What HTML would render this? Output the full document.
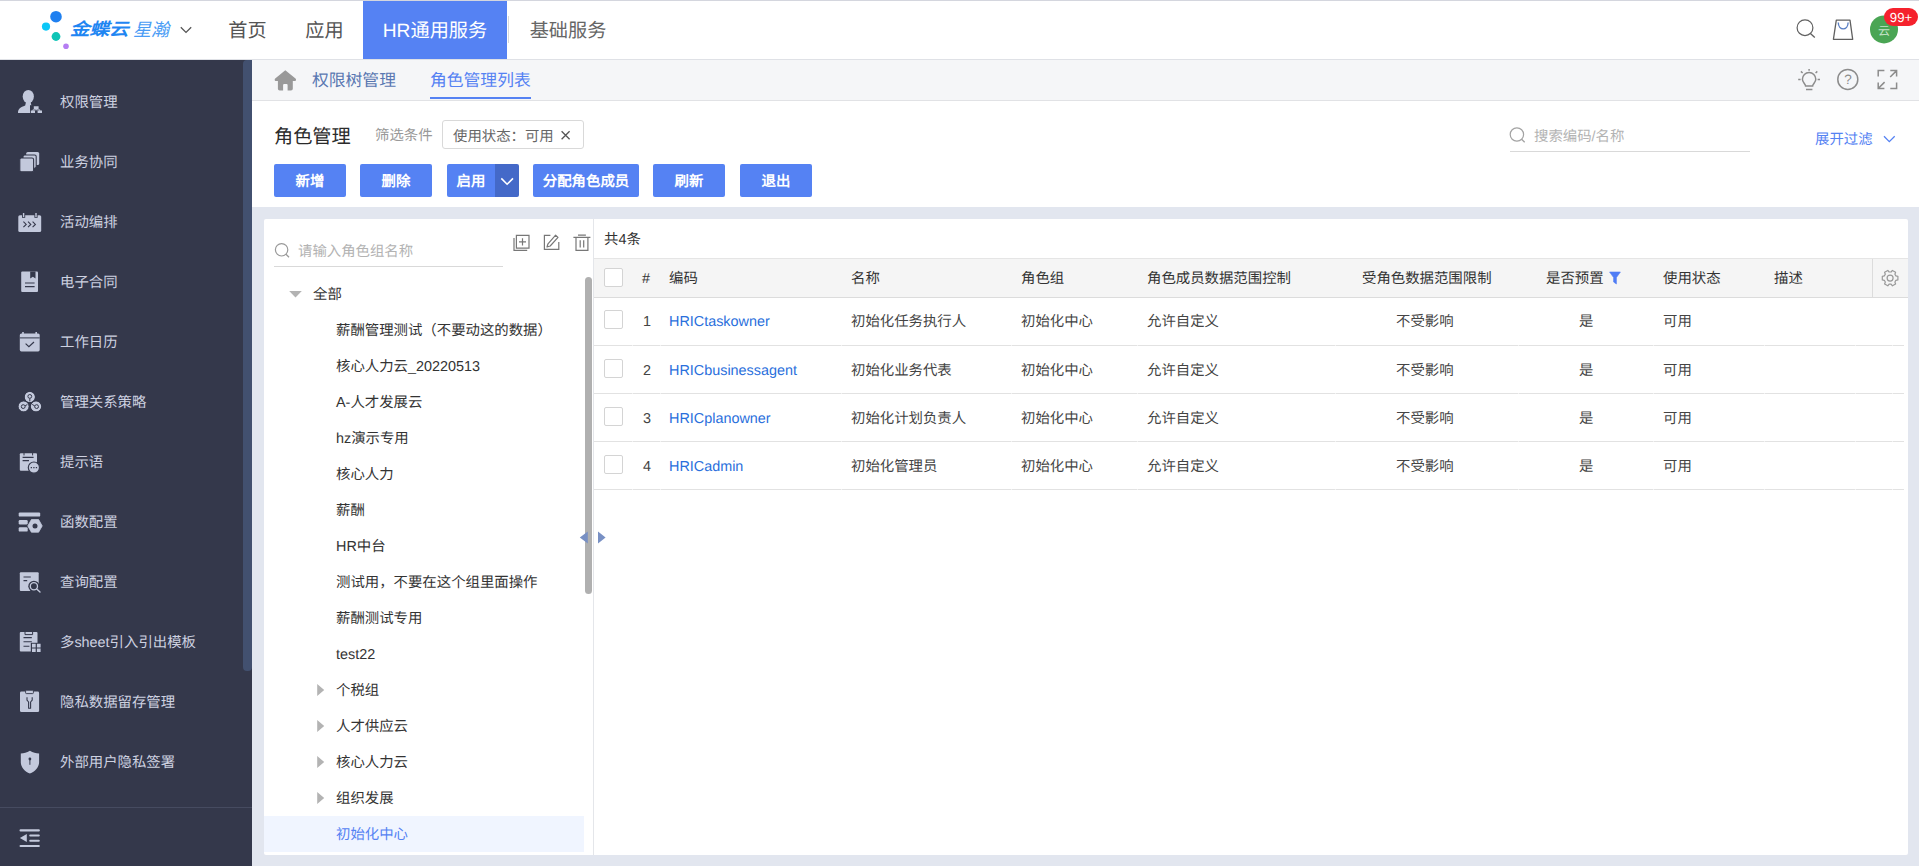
<!DOCTYPE html>
<html lang="zh-CN">
<head>
<meta charset="utf-8">
<title>角色管理</title>
<style>
*{box-sizing:border-box;margin:0;padding:0}
html,body{width:1919px;height:866px;overflow:hidden;background:#e2e6ef;font-family:"Liberation Sans",sans-serif;font-size:14.4px;color:#333;text-rendering:geometricPrecision}
.abs{position:absolute}
svg{display:block;position:absolute;overflow:visible}
/* top nav */
#top{position:absolute;left:0;top:0;width:1919px;height:60px;background:#fff;border-top:1px solid #d4d6de;border-bottom:1px solid #dfe1e6}
.nt{position:absolute;top:0;height:58px;line-height:61px;font-size:19.2px;color:#555;text-align:center;white-space:nowrap}
.nt.on{background:#5582f3;color:#fff}
/* sidebar */
#side{position:absolute;left:0;top:60px;width:252px;height:806px;background:#34384b}
.si{position:absolute;left:60px;height:20px;line-height:20px;font-size:14.4px;margin-top:2px;color:#cdd1e0;white-space:nowrap}
.ic{fill:#c3c9dc}
/* tab bar */
#tabs{position:absolute;left:252px;top:60px;width:1667px;height:41px;background:#f5f6f8;border-bottom:1px solid #e1e2e5}
.tb{position:absolute;top:0;height:40px;line-height:42px;font-size:16.8px;white-space:nowrap}
/* header */
#head{position:absolute;left:252px;top:101px;width:1667px;height:106px;background:#fff}
.btn{position:absolute;top:164px;height:33px;line-height:36px;background:#5582f3;color:#fff;font-size:14.4px;font-weight:bold;text-align:center;border-radius:2px;white-space:nowrap}
/* panels */
#tree{position:absolute;left:264px;top:219px;width:330px;height:636px;background:#fff;border-radius:2px 0 0 2px;border-right:1px solid #e4e6ea}
#grid{position:absolute;left:594px;top:219px;width:1314px;height:636px;background:#fff;border-radius:0 2px 2px 0}
.tr{position:absolute;left:336px;height:20px;line-height:20px;font-size:14.4px;margin-top:1px;color:#333;white-space:nowrap}
.th,.td{position:absolute;height:20px;line-height:20px;font-size:14.4px;white-space:nowrap}
.th{color:#333;margin-top:1px}.td{color:#444;margin-top:1px}
.lk{color:#2a6fdc}
.cb{position:absolute;left:604px;width:19px;height:19px;border:1px solid #d4d4d4;border-radius:2px;background:#fff}
.rl{position:absolute;left:594px;width:1310px;height:1px;background:#e2e2e2}
</style>
</head>
<body>
<!-- TOP NAV -->
<div id="top"></div>
<svg style="left:40px;top:10px" width="32" height="42" viewBox="40 10 32 42">
 <circle cx="56" cy="16.7" r="5.8" fill="#1f80f0"/>
 <circle cx="46" cy="26.6" r="4.1" fill="#0cc7f7"/>
 <circle cx="56" cy="36.5" r="4.4" fill="#0fc4b6"/>
 <circle cx="66" cy="46.2" r="2.8" fill="#b57df2"/>
</svg>
<div class="abs" style="left:70px;top:19px;height:22px;line-height:22px;font-size:17px;font-weight:bold;font-style:italic;color:#1f86f2;white-space:nowrap;transform:scaleX(1.15);transform-origin:0 50%">金蝶云</div>
<div class="abs" style="left:133px;top:19px;height:22px;line-height:22px;font-size:18px;font-style:italic;color:#4a9cf5;white-space:nowrap">星瀚</div>
<svg style="left:180px;top:26px" width="12" height="8" viewBox="0 0 12 8"><path d="M0.8 1.2 L6 6.4 L11.2 1.2" fill="none" stroke="#555" stroke-width="1.3"/></svg>
<div class="nt" style="left:209px;width:77px;top:1px">首页</div>
<div class="nt" style="left:286px;width:77px;top:1px">应用</div>
<div class="nt on" style="left:363px;width:144px;top:1px">HR通用服务</div>
<div class="abs" style="left:508px;top:16px;width:1px;height:27px;background:#d9d9d9"></div>
<div class="nt" style="left:510px;width:116px;top:1px;color:#666">基础服务</div>

<!-- SIDEBAR -->
<div id="side"></div>
<div class="abs" style="left:243px;top:60px;width:9px;height:611px;background:#42506f;border-radius:4px 0 4px 4px"></div>
<div class="si" style="top:91px">权限管理</div>
<div class="si" style="top:151px">业务协同</div>
<div class="si" style="top:211px">活动编排</div>
<div class="si" style="top:271px">电子合同</div>
<div class="si" style="top:331px">工作日历</div>
<div class="si" style="top:391px">管理关系策略</div>
<div class="si" style="top:451px">提示语</div>
<div class="si" style="top:511px">函数配置</div>
<div class="si" style="top:571px">查询配置</div>
<div class="si" style="top:631px">多sheet引入引出模板</div>
<div class="si" style="top:691px">隐私数据留存管理</div>
<div class="si" style="top:751px">外部用户隐私签署</div>
<div class="abs" style="left:0;top:807px;width:252px;height:1px;background:#464b60"></div>

<!-- TAB BAR -->
<div id="tabs"></div>
<div class="tb" style="left:312px;top:60px;color:#5a78b2">权限树管理</div>
<div class="tb" style="left:430px;top:60px;color:#5582f3">角色管理列表</div>
<div class="abs" style="left:430px;top:97px;width:101px;height:2px;background:#5582f3"></div>

<!-- HEADER -->
<div id="head"></div>
<div class="abs" style="left:274px;top:125px;height:26px;line-height:26px;font-size:19.2px;color:#2b2b2b;white-space:nowrap">角色管理</div>
<div class="abs" style="left:375px;top:126px;height:20px;line-height:20px;font-size:14.4px;color:#999;white-space:nowrap">筛选条件</div>
<div class="abs" style="left:442px;top:120px;width:142px;height:29px;border:1px solid #d9d9d9;border-radius:3px;background:#fff"></div>
<div class="abs" style="left:453px;top:126.5px;height:20px;line-height:20px;font-size:14.4px;color:#666;white-space:nowrap">使用状态：可用</div>
<div class="btn" style="left:274px;width:72px">新增</div>
<div class="btn" style="left:360px;width:72px">删除</div>
<div class="btn" style="left:447px;width:48px;border-radius:2px 0 0 2px">启用</div>
<div class="btn" style="left:495px;width:24px;background:#4469c8;border-radius:0 2px 2px 0"></div>
<div class="btn" style="left:533px;width:106px">分配角色成员</div>
<div class="btn" style="left:653px;width:72px">刷新</div>
<div class="btn" style="left:740px;width:72px">退出</div>
<div class="abs" style="left:1510px;top:151px;width:240px;height:1px;background:#d9d9d9"></div>
<div class="abs" style="left:1534px;top:126.5px;height:20px;line-height:20px;font-size:14.4px;color:#b3b3b3;white-space:nowrap">搜索编码/名称</div>
<div class="abs" style="left:1815px;top:129.5px;height:20px;line-height:20px;font-size:14.4px;color:#5582f3;white-space:nowrap">展开过滤</div>

<!-- TREE PANEL -->
<div id="tree"></div>
<div class="abs" style="left:274px;top:266px;width:229px;height:1px;background:#d9d9d9"></div>
<div class="abs" style="left:298px;top:241.5px;height:20px;line-height:20px;font-size:14.4px;color:#b3b3b3;white-space:nowrap">请输入角色组名称</div>
<div class="abs" style="left:264px;top:816px;width:320px;height:36px;background:#f0f5ff"></div>
<div class="abs" style="left:585px;top:277px;width:7px;height:317px;background:#b0b0b0;border-radius:4px"></div>
<div class="tr" style="left:313px;top:284px">全部</div>
<div class="tr" style="top:320px">薪酬管理测试（不要动这的数据）</div>
<div class="tr" style="top:356px">核心人力云_20220513</div>
<div class="tr" style="top:392px">A-人才发展云</div>
<div class="tr" style="top:428px">hz演示专用</div>
<div class="tr" style="top:464px">核心人力</div>
<div class="tr" style="top:500px">薪酬</div>
<div class="tr" style="top:536px">HR中台</div>
<div class="tr" style="top:572px">测试用，不要在这个组里面操作</div>
<div class="tr" style="top:608px">薪酬测试专用</div>
<div class="tr" style="top:644px">test22</div>
<div class="tr" style="top:680px">个税组</div>
<div class="tr" style="top:716px">人才供应云</div>
<div class="tr" style="top:752px">核心人力云</div>
<div class="tr" style="top:788px">组织发展</div>
<div class="tr" style="top:824px;color:#5582f3">初始化中心</div>

<!-- GRID PANEL -->
<div id="grid"></div>
<div class="abs" style="left:604px;top:229.5px;height:20px;line-height:20px;font-size:14.4px;color:#333;white-space:nowrap">共4条</div>
<div class="abs" style="left:594px;top:258px;width:1314px;height:40px;background:#f5f5f5;border-top:1px solid #e5e5e5;border-bottom:1px solid #dcdcdc"></div>
<div class="abs" style="left:1872px;top:259px;width:1px;height:38px;background:#dcdcdc"></div>
<div class="cb" style="top:268px"></div>
<div class="th" style="left:642px;top:268px">#</div>
<div class="th" style="left:669px;top:268px">编码</div>
<div class="th" style="left:851px;top:268px">名称</div>
<div class="th" style="left:1021px;top:268px">角色组</div>
<div class="th" style="left:1147px;top:268px">角色成员数据范围控制</div>
<div class="th" style="left:1362px;top:268px">受角色数据范围限制</div>
<div class="th" style="left:1546px;top:268px">是否预置</div>
<div class="th" style="left:1663px;top:268px">使用状态</div>
<div class="th" style="left:1774px;top:268px">描述</div>
<!-- ROWS -->
<div class="cb" style="top:310px"></div>
<div class="td" style="left:643px;top:311px">1</div>
<div class="td lk" style="left:669px;top:311px">HRICtaskowner</div>
<div class="td" style="left:851px;top:311px">初始化任务执行人</div>
<div class="td" style="left:1021px;top:311px">初始化中心</div>
<div class="td" style="left:1147px;top:311px">允许自定义</div>
<div class="td" style="left:1396px;top:311px">不受影响</div>
<div class="td" style="left:1579px;top:311px">是</div>
<div class="td" style="left:1663px;top:311px">可用</div>
<div class="rl" style="top:345px"></div>
<div class="cb" style="top:359px"></div>
<div class="td" style="left:643px;top:360px">2</div>
<div class="td lk" style="left:669px;top:360px">HRICbusinessagent</div>
<div class="td" style="left:851px;top:360px">初始化业务代表</div>
<div class="td" style="left:1021px;top:360px">初始化中心</div>
<div class="td" style="left:1147px;top:360px">允许自定义</div>
<div class="td" style="left:1396px;top:360px">不受影响</div>
<div class="td" style="left:1579px;top:360px">是</div>
<div class="td" style="left:1663px;top:360px">可用</div>
<div class="rl" style="top:393px"></div>
<div class="cb" style="top:407px"></div>
<div class="td" style="left:643px;top:408px">3</div>
<div class="td lk" style="left:669px;top:408px">HRICplanowner</div>
<div class="td" style="left:851px;top:408px">初始化计划负责人</div>
<div class="td" style="left:1021px;top:408px">初始化中心</div>
<div class="td" style="left:1147px;top:408px">允许自定义</div>
<div class="td" style="left:1396px;top:408px">不受影响</div>
<div class="td" style="left:1579px;top:408px">是</div>
<div class="td" style="left:1663px;top:408px">可用</div>
<div class="rl" style="top:441px"></div>
<div class="cb" style="top:455px"></div>
<div class="td" style="left:643px;top:456px">4</div>
<div class="td lk" style="left:669px;top:456px">HRICadmin</div>
<div class="td" style="left:851px;top:456px">初始化管理员</div>
<div class="td" style="left:1021px;top:456px">初始化中心</div>
<div class="td" style="left:1147px;top:456px">允许自定义</div>
<div class="td" style="left:1396px;top:456px">不受影响</div>
<div class="td" style="left:1579px;top:456px">是</div>
<div class="td" style="left:1663px;top:456px">可用</div>
<div class="rl" style="top:489px"></div>


<!-- column notches on row lines -->
<div class="abs" style="left:632px;top:298px;width:1px;height:192px;background:rgba(255,255,255,.55)"></div><div class="abs" style="left:660px;top:298px;width:1px;height:192px;background:rgba(255,255,255,.55)"></div><div class="abs" style="left:841px;top:298px;width:1px;height:192px;background:rgba(255,255,255,.55)"></div><div class="abs" style="left:1011px;top:298px;width:1px;height:192px;background:rgba(255,255,255,.55)"></div><div class="abs" style="left:1137px;top:298px;width:1px;height:192px;background:rgba(255,255,255,.55)"></div><div class="abs" style="left:1335px;top:298px;width:1px;height:192px;background:rgba(255,255,255,.55)"></div><div class="abs" style="left:1518px;top:298px;width:1px;height:192px;background:rgba(255,255,255,.55)"></div><div class="abs" style="left:1653px;top:298px;width:1px;height:192px;background:rgba(255,255,255,.55)"></div><div class="abs" style="left:1764px;top:298px;width:1px;height:192px;background:rgba(255,255,255,.55)"></div><div class="abs" style="left:1855px;top:298px;width:1px;height:192px;background:rgba(255,255,255,.55)"></div><div class="abs" style="left:1892px;top:298px;width:1px;height:192px;background:rgba(255,255,255,.55)"></div>
<!-- ICON OVERLAY -->
<svg id="ov" style="left:0;top:0" width="1919" height="866" viewBox="0 0 1919 866">
<defs><style>
 .sf{fill:#c3c9dc}.sd{fill:#34384b}.sl{stroke:#34384b;fill:none}
 .g{fill:none;stroke:#8c8c8c;stroke-width:1.5}
 .t{fill:none;stroke:#777;stroke-width:1.2}
</style></defs>
<!-- top right: search -->
<circle cx="1805" cy="27.7" r="7.9" fill="none" stroke="#606060" stroke-width="1.2"/>
<path d="M1810.4 33.5 L1814.8 37.6" stroke="#606060" stroke-width="1.3" fill="none"/>
<!-- bag -->
<path d="M1836.3 20.2 H1850 L1852.7 39.3 H1833.4 Z" fill="none" stroke="#606060" stroke-width="1.3" stroke-linejoin="round"/>
<path d="M1838.3 22.5 C1838.3 31 1848.1 31 1848.1 22.5" fill="none" stroke="#5a7fc4" stroke-width="1.4"/>
<!-- avatar -->
<circle cx="1884" cy="29.4" r="14" fill="#4aa554"/>
<!-- second row: bulb -->
<path class="g" d="M1805.6 86 C1805.6 84 1802.4 82.5 1802.4 79.2 A6.7 6.7 0 0 1 1815.8 79.2 C1815.8 82.5 1812.6 84 1812.6 86 Z"/>
<path class="g" d="M1806 89.6 H1812.4 M1809.1 69 V70.8 M1798.2 79.4 H1800.6 M1817.6 79.4 H1820 M1800.9 71.4 L1802.6 73 M1817.3 71.4 L1815.6 73"/>
<!-- help -->
<circle class="g" cx="1847.8" cy="79.4" r="10" stroke-width="1.4"/>
<!-- fullscreen -->
<path class="g" d="M1878.2 76.5 V70.6 H1884.4 M1890.3 70.6 H1896.6 V76.5 M1896.6 70.6 L1890.2 77 M1878.2 82.6 V88.5 H1884.4 M1878.2 88.5 L1884.6 82.1 M1890.3 88.5 H1896.6 V82.6"/>
<!-- home -->
<path d="M285.3 70.3 L295.5 78.5 Q296 78.9 296 79.6 V80 Q296 80.9 295 80.9 H292.8 V88.8 Q292.8 90.6 291 90.6 H287.6 V85 Q287.6 84 286.6 84 H284.1 Q283.1 84 283.1 85 V90.6 H279.7 Q277.9 90.6 277.9 88.8 V80.9 H275.7 Q274.7 80.9 274.7 80 V79.6 Q274.7 78.9 275.2 78.5 Z" fill="#999"/>
<!-- chip x -->
<path d="M561.6 131.3 L569.6 139.2 M569.6 131.3 L561.6 139.2" stroke="#555" stroke-width="1.3" fill="none"/>
<!-- button chevron -->
<path d="M501.3 178.4 L507.1 184.2 L513 178.4" stroke="#fff" stroke-width="1.6" fill="none"/>
<!-- header search -->
<circle cx="1516.9" cy="134.5" r="6.7" fill="none" stroke="#a3a3a3" stroke-width="1.2"/>
<path d="M1521.6 139.3 L1524.7 142.3" stroke="#a3a3a3" stroke-width="1.3" fill="none"/>
<!-- expand chevron -->
<path d="M1884 136.3 L1889.3 141.7 L1894.7 136.3" stroke="#5582f3" stroke-width="1.3" fill="none"/>
<!-- tree search -->
<circle cx="281.6" cy="249.8" r="6.2" fill="none" stroke="#999" stroke-width="1.2"/>
<path d="M286 254.3 L289 257.3" stroke="#999" stroke-width="1.3" fill="none"/>
<!-- tree toolbar -->
<path class="t" d="M516.4 235.3 H529 V248.1 H516.4 Z M522.5 238.3 V245.4 M519 241.9 H526 M514 238 V250.4 H527.2"/>
<path class="t" d="M550.4 235.4 H544.4 V249.4 H558.8 V242"/>
<path class="t" d="M547 247 L548 243.8 L555.6 235.2 L558 237.4 L550.2 246 Z" stroke-linejoin="round"/>
<path class="t" d="M573.4 237.3 H590.4 M578 235.2 H585.9 M576 237.3 V250.3 H587.9 V237.3 M580.2 240.3 V247.5 M583.7 240.3 V247.5"/>
<!-- tree triangles -->
<path d="M289.2 291 H301.8 L295.5 297.6 Z" fill="#b3b3b3"/>
<path d="M317.2 684 L324.2 690 L317.2 696 Z M317.2 720 L324.2 726 L317.2 732 Z M317.2 756 L324.2 762 L317.2 768 Z M317.2 792 L324.2 798 L317.2 804 Z" fill="#b3b3b3"/>
<!-- splitter arrows -->
<path d="M579.8 537.5 L587.8 531.6 V543.4 Z M605.6 537.5 L598 531.6 V543.4 Z" fill="#7890c4"/>
<!-- filter funnel -->
<path d="M1609.6 272 H1620.4 L1616.4 277.6 V284 L1613.6 282 V277.6 Z" fill="#4f7cf5" stroke="#4f7cf5" stroke-width="0.6" stroke-linejoin="round"/>
<!-- gear -->
<circle cx="1890.1" cy="278.1" r="3" fill="none" stroke="#999" stroke-width="1.2"/>
<path fill="none" stroke="#999" stroke-width="1.2" stroke-linejoin="round" d="M1895.9 275.9 L1897.9 276.3 L1897.9 279.9 L1895.9 280.3 L1894.9 282.0 L1895.6 284.0 L1892.4 285.8 L1891.1 284.2 L1889.1 284.2 L1887.8 285.8 L1884.6 284.0 L1885.3 282.0 L1884.3 280.3 L1882.3 279.9 L1882.3 276.3 L1884.3 275.9 L1885.3 274.2 L1884.6 272.2 L1887.8 270.4 L1889.1 272.0 L1891.1 272.0 L1892.4 270.4 L1895.6 272.2 L1894.9 274.2 Z"/>

<!-- SIDEBAR ICONS -->
<!-- 1 person + org -->
<ellipse class="sf" cx="28.3" cy="96.6" rx="5.6" ry="6.7"/>
<path class="sf" d="M18 113 C18 108.5 20.5 107.3 25.2 105.4 L26 102 H30.6 L31.4 105.4 C36 107.3 38.6 108.5 38.6 113 Z"/>
<rect class="sd" x="30" y="105.2" width="13" height="8.4"/>
<path class="sf" d="M33.8 106.2 H38.6 V109 H33.8 Z M30.8 110.6 H35 V113 H30.8 Z M37.6 110.6 H42 V113 H37.6 Z"/>
<path d="M36.2 108.6 V110 M32.9 111 V109.8 H39.8 V111" stroke="#c3c9dc" stroke-width="0.9" fill="none"/>
<!-- 2 stacked squares -->
<rect class="sf" x="26.2" y="152" width="13" height="13" rx="1.6"/>
<rect class="sf" x="23" y="155" width="13.2" height="13.2" rx="1.6" stroke="#34384b" stroke-width="1.1"/>
<rect class="sf" x="19.8" y="158" width="13.8" height="13.8" rx="1.6" stroke="#34384b" stroke-width="1.1"/>
<!-- 3 calendar >>> -->
<rect class="sf" x="18.3" y="215.2" width="22.9" height="16.9" rx="1.6"/>
<rect class="sd" x="22" y="213.6" width="3.2" height="4.2"/><rect class="sd" x="34.4" y="213.6" width="3.2" height="4.2"/>
<rect class="sf" x="22.9" y="213" width="1.4" height="4"/><rect class="sf" x="35.3" y="213" width="1.4" height="4"/>
<path d="M23.4 221.6 L26.2 224.4 L23.4 227.2 M28 221.6 L30.8 224.4 L28 227.2 M32.6 221.6 L35.4 224.4 L32.6 227.2" stroke="#34384b" stroke-width="1.1" fill="none"/>
<!-- 4 contract -->
<path class="sf" d="M22.2 271.6 H37 a1 1 0 0 1 1 1 V291 a1 1 0 0 1 -1 1 H22.2 a1 1 0 0 1 -1 -1 V272.6 a1 1 0 0 1 1 -1 Z"/>
<path class="sd" d="M30.2 271.4 H35.5 V278.6 L32.85 276.8 L30.2 278.6 Z"/>
<path d="M25 283 H34.6 M25 286.6 H34.6" stroke="#34384b" stroke-width="1.1" fill="none"/>
<!-- 5 calendar check -->
<rect class="sf" x="19.8" y="333.4" width="19.9" height="18" rx="1.6"/>
<rect class="sf" x="22.2" y="332" width="1.6" height="3"/><rect class="sf" x="35.4" y="332" width="1.6" height="3"/>
<path d="M19.8 337.9 H39.7" stroke="#34384b" stroke-width="1" fill="none"/>
<path d="M25.6 343.6 L28.9 346.6 L34 342" stroke="#34384b" stroke-width="1.2" fill="none"/>
<!-- 6 three circles -->
<circle class="sf" cx="29.8" cy="397" r="5.2"/><circle class="sf" cx="23.6" cy="406.4" r="5.2"/><circle class="sf" cx="36" cy="406.4" r="5.2"/>
<g fill="none" stroke="#34384b" stroke-width="1">
<circle cx="29.8" cy="397" r="5.7"/><circle cx="23.6" cy="406.4" r="5.7"/><circle cx="36" cy="406.4" r="5.7"/>
<circle cx="29.8" cy="396.4" r="1.9"/><circle cx="23.2" cy="406.6" r="1.9"/><circle cx="36.6" cy="406.6" r="1.9"/>
<path d="M29.8 398.4 V401.4 M25 406 L27.4 404.4 M34.8 406 L32.2 404.4"/>
</g>
<!-- 7 note + chat bubble -->
<path class="sf" d="M20.8 453.3 H36 a1 1 0 0 1 1 1 V469.8 a1 1 0 0 1 -1 1 H20.8 a1 1 0 0 1 -1 -1 V454.3 a1 1 0 0 1 1 -1 Z"/>
<path d="M22.6 457.4 H33.6 M22.6 460.6 H29" stroke="#34384b" stroke-width="1.1" fill="none"/>
<path d="M24 453 V455.4 M32.6 453 V455.4" stroke="#34384b" stroke-width="1" fill="none"/>
<circle class="sf" cx="33.9" cy="467.6" r="5.6" stroke="#34384b" stroke-width="1.2"/>
<path class="sd" d="M30.7 467 h1.3 v1.3 h-1.3 Z M33.25 467 h1.3 v1.3 h-1.3 Z M35.8 467 h1.3 v1.3 h-1.3 Z"/>
<!-- 8 function config -->
<rect class="sf" x="18.7" y="512.4" width="21.5" height="4.2" rx="1.2"/>
<rect class="sf" x="18.7" y="520" width="9" height="4.4" rx="1.2"/>
<rect class="sf" x="18.7" y="527.2" width="9" height="4.4" rx="1.2"/>
<path class="sf" d="M27.8 525.9 L31.4 519.6 H38.6 L42.2 525.9 L38.6 532.2 H31.4 Z" stroke="#c3c9dc" stroke-width="0.8" stroke-linejoin="round"/>
<circle class="sd" cx="35" cy="525.9" r="2.5"/>
<!-- 9 query config -->
<path class="sf" d="M20.8 572.3 H37.7 a1 1 0 0 1 1 1 V590 a1 1 0 0 1 -1 1 H20.8 a1 1 0 0 1 -1 -1 V573.3 a1 1 0 0 1 1 -1 Z"/>
<path d="M23.5 577 H30.8 M23.5 580.6 H27.2" stroke="#34384b" stroke-width="1.1" fill="none"/>
<circle class="sd" cx="33.9" cy="586.3" r="5.6"/>
<path d="M36.6 589 L39.9 592" stroke="#34384b" stroke-width="3.4" fill="none"/>
<circle cx="33.9" cy="586.3" r="3.6" fill="#34384b" stroke="#c3c9dc" stroke-width="1.3"/>
<path d="M36.7 589 L40 592" stroke="#c3c9dc" stroke-width="1.4" fill="none" stroke-linecap="round"/>
<!-- 10 multi sheet -->
<path class="sf" d="M20.8 632 H36.5 a1 1 0 0 1 1 1 V650.4 a1 1 0 0 1 -1 1 H20.8 a1 1 0 0 1 -1 -1 V633 a1 1 0 0 1 1 -1 Z"/>
<path d="M25 632 V634.6 H32.6 V632" stroke="#34384b" stroke-width="1" fill="none"/>
<path d="M23.5 637.6 H31.8 M23.5 641.7 H31.8 M23.5 646.2 H29.4" stroke="#34384b" stroke-width="1.1" fill="none"/>
<rect class="sd" x="30.8" y="642.8" width="10.6" height="10"/>
<path class="sf" d="M32 643.8 h3.7 v3.6 h-3.7 Z M36.9 643.8 h3.7 v3.6 h-3.7 Z M32 648.5 h3.7 v3.6 h-3.7 Z M36.9 648.5 h3.7 v3.6 h-3.7 Z"/>
<!-- 11 clipboard wrench -->
<rect class="sf" x="20" y="691.6" width="19.1" height="20.5" rx="1.4"/>
<rect class="sf" x="25.6" y="690.2" width="7.8" height="3.4" rx="0.8" stroke="#34384b" stroke-width="0.9"/>
<path d="M27 697.2 V700.2 L28.6 702 V708.2 H30.6 V702 L32.2 700.2 V697.2" stroke="#34384b" stroke-width="1.1" fill="none" stroke-linejoin="round"/>
<!-- 12 shield -->
<path class="sf" d="M29.9 750.8 C33 752.6 36 753.4 39.1 753.6 V762 C39.1 767.6 35 771.4 29.9 773.6 C24.8 771.4 20.8 767.6 20.8 762 V753.6 C23.8 753.4 26.8 752.6 29.9 750.8 Z"/>
<circle class="sd" cx="29.9" cy="759" r="1.4"/>
<path d="M29.9 759 V764.8" stroke="#34384b" stroke-width="1" fill="none"/>
<!-- collapse -->
<path class="sf" d="M20.6 829.3 H38.8 a1.1 1.1 0 0 1 0 2.2 H20.6 a1.1 1.1 0 0 1 0 -2.2 Z M20.6 844.9 H38.8 a1.1 1.1 0 0 1 0 2.2 H20.6 a1.1 1.1 0 0 1 0 -2.2 Z M30.2 834.6 H38.8 a1 1 0 0 1 0 2 H30.2 a1 1 0 0 1 0 -2 Z M30.2 839.7 H38.8 a1 1 0 0 1 0 2 H30.2 a1 1 0 0 1 0 -2 Z M19.9 838 L26.8 834 V842 Z"/>
</svg>

<!-- avatar text / badge / help ? -->
<div class="abs" style="left:1870px;top:21px;width:28px;height:20px;line-height:20px;text-align:center;font-size:12px;color:#c4e3c8;z-index:3">云</div>
<div class="abs" style="left:1884px;top:8px;width:34px;height:18px;border-radius:9px;background:#f5222d;z-index:4"></div>
<div class="abs" style="left:1884px;top:8px;width:34px;height:18px;line-height:19px;text-align:center;font-size:13.2px;color:#fff;z-index:5">99+</div>
<div class="abs" style="left:1838px;top:70px;width:20px;height:20px;line-height:20px;text-align:center;font-size:13.5px;color:#8c8c8c;z-index:3">?</div>
</body>
</html>
